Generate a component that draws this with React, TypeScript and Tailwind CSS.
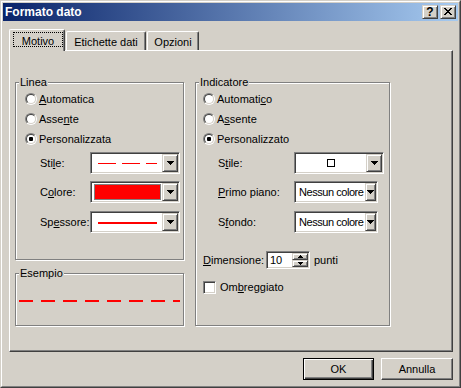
import React from "react";

const sunken =
  "border border-t-[#808080] border-l-[#808080] border-b-white border-r-white shadow-[inset_1px_1px_0_#404040,inset_-1px_-1px_0_#d4d0c8]";
const raised =
  "border border-t-[#d4d0c8] border-l-[#d4d0c8] border-b-[#404040] border-r-[#404040] shadow-[inset_1px_1px_0_#ffffff,inset_-1px_-1px_0_#808080]";
const etched = "relative border border-[#808080] shadow-[inset_1px_1px_0_#ffffff,1px_1px_0_#ffffff]";

function DownArrow() {
  return (
    <svg width="7" height="4" shapeRendering="crispEdges">
      <rect x="0" y="0" width="7" height="1" />
      <rect x="1" y="1" width="5" height="1" />
      <rect x="2" y="2" width="3" height="1" />
      <rect x="3" y="3" width="1" height="1" />
    </svg>
  );
}

function SmallArrow({ up }: { up?: boolean }) {
  return (
    <svg width="5" height="3" shapeRendering="crispEdges">
      {up ? (
        <>
          <rect x="2" y="0" width="1" height="1" />
          <rect x="1" y="1" width="3" height="1" />
          <rect x="0" y="2" width="5" height="1" />
        </>
      ) : (
        <>
          <rect x="0" y="0" width="5" height="1" />
          <rect x="1" y="1" width="3" height="1" />
          <rect x="2" y="2" width="1" height="1" />
        </>
      )}
    </svg>
  );
}

function Combo({
  className,
  btn,
  children,
}: {
  className: string;
  btn: string;
  children?: React.ReactNode;
}) {
  return (
    <div className={`${sunken} ${className} h-[22px] p-px bg-white flex shrink-0`}>
      <div className="flex-1 min-w-0 flex items-center overflow-hidden whitespace-nowrap">{children}</div>
      <div className={`${raised} ${btn} bg-[#d4d0c8] flex items-center justify-center shrink-0`}>
        <DownArrow />
      </div>
    </div>
  );
}

function Radio({ checked }: { checked?: boolean }) {
  return (
    <span className="w-[12px] h-[12px] rounded-full border border-t-[#808080] border-l-[#808080] border-b-white border-r-white flex shrink-0">
      <span className="flex-1 rounded-full border border-t-[#404040] border-l-[#404040] border-b-[#d4d0c8] border-r-[#d4d0c8] bg-white flex items-center justify-center">
        {checked && <span className="w-[4px] h-[4px] rounded-[1px] bg-black" />}
      </span>
    </span>
  );
}

function RadioRow({ checked, children }: { checked?: boolean; children: React.ReactNode }) {
  return (
    <div className="h-[20px] flex items-center gap-[2px]">
      <Radio checked={checked} />
      <span>{children}</span>
    </div>
  );
}

function U({ children }: { children: React.ReactNode }) {
  return <span className="underline underline-offset-[1px]">{children}</span>;
}

function CloseGlyph() {
  const rows = [0, 1, 2, 3, 4, 5, 6];
  return (
    <svg width="14" height="12" shapeRendering="crispEdges">
      {rows.map((i) => (
        <React.Fragment key={i}>
          <rect x={3 + i} y={2 + i} width="2" height="1" fill="#000" />
          <rect x={9 - i} y={2 + i} width="2" height="1" fill="#000" />
        </React.Fragment>
      ))}
    </svg>
  );
}

export default function App() {
  return (
    <div className="w-[461px] h-[388px] bg-[#d4d0c8] font-['Liberation_Sans',Arial,sans-serif] text-[11px] leading-[13px] text-black border border-t-[#d4d0c8] border-l-[#d4d0c8] border-b-[#404040] border-r-[#404040]">
      <div className="h-full border border-t-white border-l-white border-b-[#808080] border-r-[#808080] p-px flex flex-col">
        {/* Title bar */}
        <div className="h-[18px] shrink-0 flex items-center bg-linear-to-r/srgb from-[#0a246a] to-[#a6caf0] pl-[2px] pr-[2px]">
          <span className="flex-1 text-white font-bold text-[12px] leading-[18px]">Formato dato</span>
          <div className="flex gap-[2px]">
            <div className={`${raised} w-[16px] h-[14px] bg-[#d4d0c8] flex items-center justify-center`}>
              <span className="font-bold text-[12px] leading-[12px] text-black">?</span>
            </div>
            <div className={`${raised} w-[16px] h-[14px] bg-[#d4d0c8] flex items-center justify-center`}>
              <CloseGlyph />
            </div>
          </div>
        </div>

        {/* Body */}
        <div className="pl-[6px] pt-[8px] flex flex-col">
          {/* Tabs */}
          <div className="h-[21px] flex items-end">
            <div className="relative z-10 -mb-px h-[22px] w-[56px] bg-[#d4d0c8] border-t border-l border-r border-t-white border-l-white border-r-[#404040] rounded-t-[2px] shadow-[inset_-1px_0_0_#808080] pl-[3px] pt-[2px]">
              <div className="w-[50px] h-[15px] border border-dotted border-black text-center pt-[2px]">
                Motivo
              </div>
            </div>
            <div className="h-[19px] w-[80px] ml-px border-t border-l border-r border-t-white border-l-white border-r-[#404040] rounded-t-[2px] shadow-[inset_-1px_0_0_#808080] text-center pt-[4px]">
              Etichette dati
            </div>
            <div className="h-[19px] w-[52px] ml-px border-t border-l border-r border-t-white border-l-white border-r-[#404040] rounded-t-[2px] shadow-[inset_-1px_0_0_#808080] text-center pt-[4px]">
              Opzioni
            </div>
          </div>

          {/* Panel */}
          <div className="w-[444px] h-[302px] border border-t-white border-l-white border-b-[#404040] border-r-[#404040] shadow-[inset_-1px_-1px_0_#808080] pl-[5px] pt-[31px] flex gap-[11px]">
            {/* Left column */}
            <div className="flex flex-col">
              <div className={`${etched} w-[169px] h-[178px] pl-[9px] pt-[6px] flex flex-col`}>
                <span className="absolute left-[3px] -top-[7px] px-px bg-[#d4d0c8]">Linea</span>
                <RadioRow>
                  <U>A</U>utomatica
                </RadioRow>
                <RadioRow>
                  Asse<U>n</U>te
                </RadioRow>
                <RadioRow checked>Personalizzata</RadioRow>

                <div className="mt-[3px] ml-[15px] flex items-center">
                  <span className="w-[50px]">
                    Sti<U>l</U>e:
                  </span>
                  <Combo className="w-[90px]" btn="w-[16px] h-full">
                    <svg width="59" height="1" className="ml-[6px]" shapeRendering="crispEdges">
                      <line x1="0" y1="0.5" x2="59" y2="0.5" stroke="#ff0000" strokeWidth="1" strokeDasharray="18 6" />
                    </svg>
                  </Combo>
                </div>
                <div className="mt-[7px] ml-[15px] flex items-center">
                  <span className="w-[50px]">
                    C<U>o</U>lore:
                  </span>
                  <Combo className="w-[90px]" btn="w-[16px] h-full">
                    <div className="ml-[2px] mr-px my-px h-[16px] flex-1 border border-[#808080] bg-[#ff0000]" />
                  </Combo>
                </div>
                <div className="mt-[8px] ml-[15px] flex items-center">
                  <span className="w-[50px]">
                    Sp<U>e</U>ssore:
                  </span>
                  <Combo className="w-[90px]" btn="w-[16px] h-full">
                    <div className="ml-[6px] w-[59px] h-[2px] bg-[#ff0000] mt-px" />
                  </Combo>
                </div>
              </div>

              <div className={`${etched} w-[169px] h-[53px] mt-[13px] pl-[3px] pt-[26px]`}>
                <span className="absolute left-[3px] -top-[7px] px-px bg-[#d4d0c8]">Esempio</span>
                <svg width="161" height="2" className="block" shapeRendering="crispEdges">
                  <line x1="0" y1="1" x2="161" y2="1" stroke="#ff0000" strokeWidth="2" strokeDasharray="14 8" />
                </svg>
              </div>
            </div>

            {/* Right column */}
            <div className={`${etched} w-[195px] h-[244px] pl-[7px] pt-[6px] flex flex-col`}>
              <span className="absolute left-[3px] -top-[7px] px-px bg-[#d4d0c8]">Indicatore</span>
              <RadioRow>
                Automati<U>c</U>o
              </RadioRow>
              <RadioRow>
                A<U>s</U>sente
              </RadioRow>
              <RadioRow checked>Personalizzato</RadioRow>

              <div className="mt-[3px] ml-[15px] flex items-center">
                <span className="w-[76px]">
                  S<U>t</U>ile:
                </span>
                <Combo className="w-[90px]" btn="w-[16px] h-full">
                  <div className="flex-1 flex justify-center">
                    <div className="w-[8px] h-[8px] border border-black bg-white" />
                  </div>
                </Combo>
              </div>
              <div className="mt-[7px] ml-[15px] flex items-center">
                <span className="w-[76px]">
                  <U>P</U>rimo piano:
                </span>
                <Combo className="w-[84px]" btn="w-[11px] h-full">
                  <span className="pl-[3px] tracking-[-0.45px]">Nessun colore</span>
                </Combo>
              </div>
              <div className="mt-[8px] ml-[15px] flex items-center">
                <span className="w-[76px]">
                  S<U>f</U>ondo:
                </span>
                <Combo className="w-[84px]" btn="w-[11px] h-full">
                  <span className="pl-[3px] tracking-[-0.45px]">Nessun colore</span>
                </Combo>
              </div>

              <div className="mt-[18px] flex items-center">
                <span className="w-[63px]">
                  <U>D</U>imensione:
                </span>
                <div className={`${sunken} w-[44px] h-[18px] p-px bg-white flex`}>
                  <span className="flex-1 pl-[2px] leading-[14px]">10</span>
                  <div className="w-[16px] flex flex-col">
                    <div className={`${raised} h-[7px] bg-[#d4d0c8] flex items-center justify-center`}>
                      <SmallArrow up />
                    </div>
                    <div className={`${raised} h-[7px] bg-[#d4d0c8] flex items-center justify-center`}>
                      <SmallArrow />
                    </div>
                  </div>
                </div>
                <span className="ml-[4px]">punti</span>
              </div>

              <div className="mt-[12px] flex items-center gap-[4px]">
                <span className="w-[13px] h-[13px] border border-t-[#808080] border-l-[#808080] border-b-white border-r-white shadow-[inset_1px_1px_0_#404040,inset_-1px_-1px_0_#d4d0c8] bg-white shrink-0" />
                <span>
                  Om<U>b</U>reggiato
                </span>
              </div>
            </div>
          </div>

          {/* Buttons */}
          <div className="w-[444px] mt-[6px] flex justify-end gap-[7px]">
            <div className="w-[71px] h-[22px] border border-black shadow-[inset_1px_1px_0_#ffffff,inset_-1px_-1px_0_#404040,inset_-2px_-2px_0_#808080] flex items-center justify-center">
              OK
            </div>
            <div className="w-[72px] h-[22px] border border-t-white border-l-white border-b-[#404040] border-r-[#404040] shadow-[inset_-1px_-1px_0_#808080] flex items-center justify-center">
              Annulla
            </div>
          </div>
        </div>
      </div>
    </div>
  );
}
